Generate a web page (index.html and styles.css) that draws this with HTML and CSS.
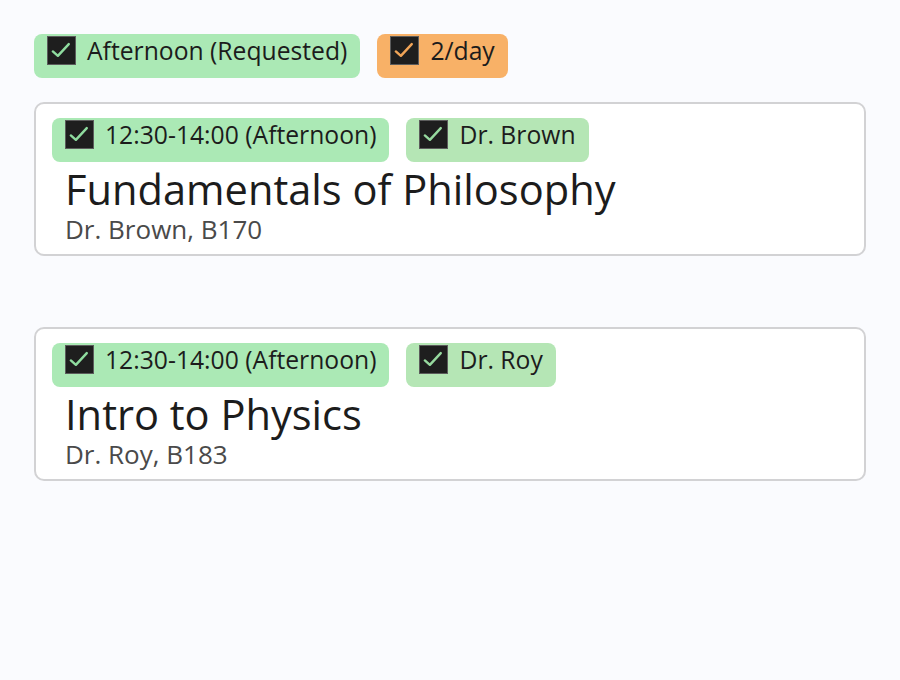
FILE: index.html
```html
<!DOCTYPE html>
<html lang="en">
<head>
<meta charset="utf-8">
<title>Schedule</title>
<link rel="stylesheet" href="styles.css">
</head>
<body>
<div class="filters">
  <span class="chip chip-green">
    <span class="box"><svg viewBox="0 0 29 29" width="27" height="27"><path d="M5.2 15.5 L10.6 20.2 L22.3 7.6" class="tick"/></svg></span>
    <span class="chip-label">Afternoon (Requested)</span>
  </span>
  <span class="chip chip-orange">
    <span class="box"><svg viewBox="0 0 29 29" width="27" height="27"><path d="M5.2 15.5 L10.6 20.2 L22.3 7.6" class="tick"/></svg></span>
    <span class="chip-label">2/day</span>
  </span>
</div>

<div class="card">
  <div class="card-tags">
    <span class="chip chip-green">
      <span class="box"><svg viewBox="0 0 29 29" width="27" height="27"><path d="M5.2 15.5 L10.6 20.2 L22.3 7.6" class="tick"/></svg></span>
      <span class="chip-label">12:30-14:00 (Afternoon)</span>
    </span>
    <span class="chip chip-pale">
      <span class="box"><svg viewBox="0 0 29 29" width="27" height="27"><path d="M5.2 15.5 L10.6 20.2 L22.3 7.6" class="tick"/></svg></span>
      <span class="chip-label">Dr. Brown</span>
    </span>
  </div>
  <div class="course-title">Fundamentals of Philosophy</div>
  <div class="course-sub">Dr. Brown, B170</div>
</div>

<div class="card">
  <div class="card-tags">
    <span class="chip chip-green">
      <span class="box"><svg viewBox="0 0 29 29" width="27" height="27"><path d="M5.2 15.5 L10.6 20.2 L22.3 7.6" class="tick"/></svg></span>
      <span class="chip-label">12:30-14:00 (Afternoon)</span>
    </span>
    <span class="chip chip-pale">
      <span class="box"><svg viewBox="0 0 29 29" width="27" height="27"><path d="M5.2 15.5 L10.6 20.2 L22.3 7.6" class="tick"/></svg></span>
      <span class="chip-label">Dr. Roy</span>
    </span>
  </div>
  <div class="course-title">Intro to Physics</div>
  <div class="course-sub">Dr. Roy, B183</div>
</div>
</body>
</html>
```

FILE: styles.css
```css
html, body {
  margin: 0;
  background: #fafbfe;
}
body {
  padding: 34px 34px;
  font-family: "Open Sans", "Noto Sans", sans-serif;
  color: #1c1c1c;
}
.filters {
  display: flex;
  gap: 17px;
  margin-bottom: 24px;
}
.chip {
  display: inline-flex;
  align-items: flex-start;
  gap: 11px;
  height: 44px;
  box-sizing: border-box;
  padding: 2px 13px 0 13px;
  border-radius: 8px;
}
.chip-green { background: #abe9b5; --tick: #8fdc9f; }
.chip-pale { background: #b5e6b5; --tick: #96d99e; }
.chip-orange { background: #f8b167; --tick: #f0a457; }
.box {
  width: 29px;
  height: 29px;
  box-sizing: border-box;
  flex: none;
  background: #1e1e1e;
  border: 1px solid #5c5c5c;
  display: block;
}
.box svg { display: block; }
.tick {
  fill: none;
  stroke: var(--tick);
  stroke-width: 2.6;
  stroke-linecap: round;
  stroke-linejoin: round;
}
.chip-label {
  font-size: 24.7px;
  line-height: 29px;
  white-space: nowrap;
}
.card {
  width: 832px;
  box-sizing: border-box;
  border: 2px solid #d2d2d4;
  border-radius: 10px;
  background: #ffffff;
  padding: 14px 16px 11px 16px;
  margin-bottom: 71px;
}
.card-tags {
  display: flex;
  gap: 17px;
}
.course-title {
  margin: 5px 0 0 13px;
  font-size: 41.6px;
  line-height: 44px;
  color: #1c1c1c;
}
.course-sub {
  margin: 4px 0 0 13px;
  font-size: 26px;
  line-height: 28px;
  color: #4a4a4a;
}
```
